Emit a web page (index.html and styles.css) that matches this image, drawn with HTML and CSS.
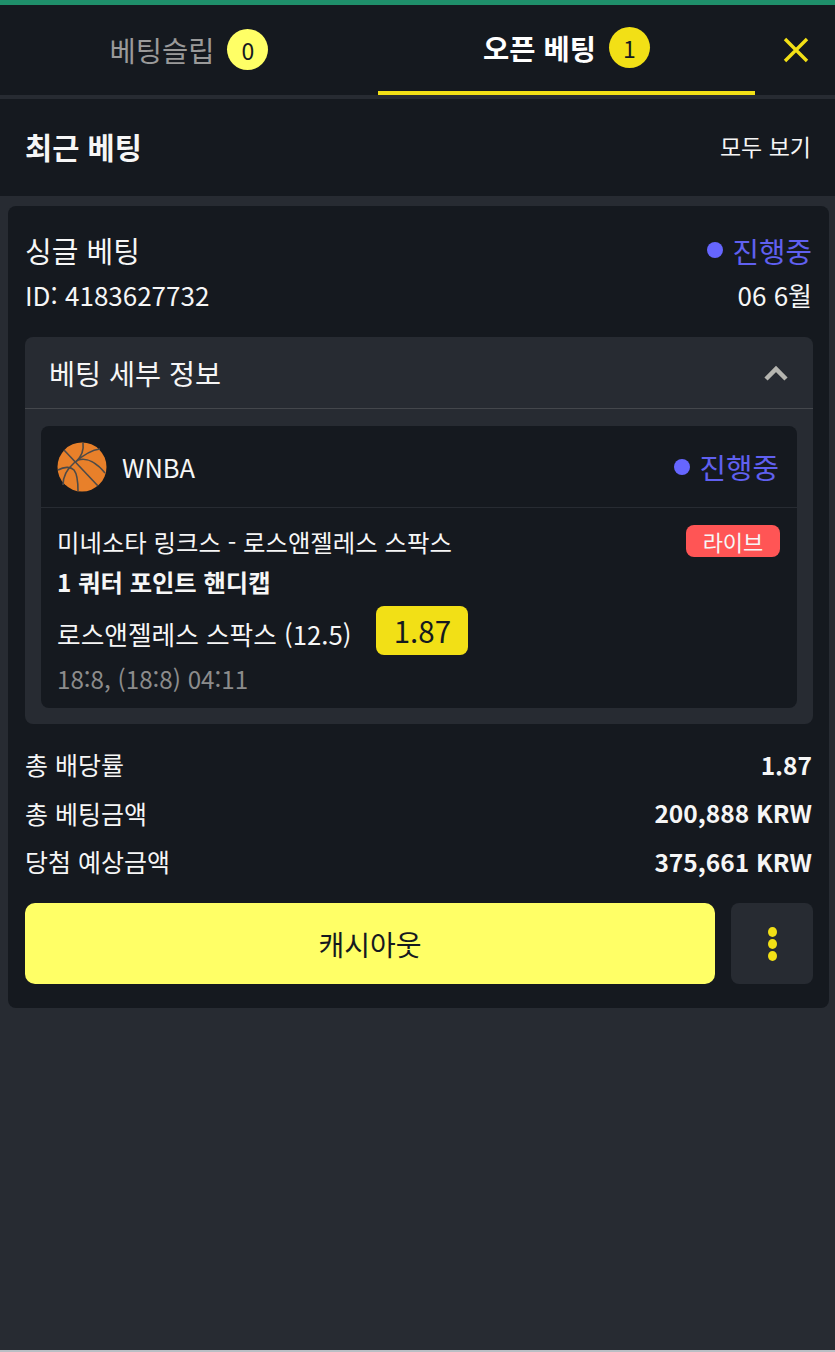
FILE: index.html
```html
<!DOCTYPE html>
<html lang="ko">
<head>
  <meta charset="UTF-8">
  <meta name="viewport" content="width=device-width, initial-scale=1.0">
  <title>오픈 베팅</title>
  <link rel="stylesheet" href="styles.css">
</head>
<body>
  <div class="top-bar"></div>
  <header class="tabs">
    <div class="tab">
      <span>베팅슬립</span>
      <span class="count count-light">0</span>
    </div>
    <div class="tab tab-active">
      <span>오픈 베팅</span>
      <span class="count">1</span>
    </div>
    <div class="tab-close">
      <svg width="26" height="26" viewBox="0 0 26 26">
        <path d="M2 2 L24 24 M24 2 L2 24" stroke="#f2e016" stroke-width="3.4" fill="none"/>
      </svg>
    </div>
  </header>
  <div class="recent">
    <h1>최근 베팅</h1>
    <a class="see-all">모두 보기</a>
  </div>
  <main class="bet-card">
    <div class="row bet-title">
      <span>싱글 베팅</span>
      <span class="status"><i class="dot"></i>진행중</span>
    </div>
    <div class="row bet-id">
      <span>ID: 4183627732</span>
      <span>06 6월</span>
    </div>
    <section class="details">
      <div class="details-head">
        <span>베팅 세부 정보</span>
        <svg width="26" height="18" viewBox="0 0 26 18">
          <path d="M3 15 L13 5 L23 15" stroke="#b5b5b0" stroke-width="4.5" fill="none"/>
        </svg>
      </div>
      <div class="event">
        <div class="event-head">
          <div class="league">
            <svg width="50" height="50" viewBox="0 0 50 50">
              <circle cx="25" cy="25" r="24.5" fill="#e8802a"/>
              <g fill="none" stroke="#4d4a48" stroke-width="1.6">
                <path d="M7 8 L41 44"/>
                <path d="M43 7 C34 8 25 14 17 21 C10 27 6 34 6 43"/>
                <path d="M26 1 C27 8 25 14 19 20"/>
                <path d="M1 28 C8 24 14 25 17 28 C21 33 21 42 21 49"/>
                <path d="M21 18 C30 15 40 21 48 31"/>
              </g>
            </svg>
            <span>WNBA</span>
          </div>
          <span class="status"><i class="dot"></i>진행중</span>
        </div>
        <div class="event-body">
          <div class="row event-teams">
            <span>미네소타 링크스 - 로스앤젤레스 스팍스</span>
            <span class="live">라이브</span>
          </div>
          <div class="event-market">1 쿼터 포인트 핸디캡</div>
          <div class="event-pick">
            <span class="pick-name">로스앤젤레스 스팍스 (12.5)</span>
            <span class="odds">1.87</span>
          </div>
          <div class="event-score">18:8, (18:8) 04:11</div>
        </div>
      </div>
    </section>
    <div class="row total">
      <span>총 배당률</span>
      <b>1.87</b>
    </div>
    <div class="row total">
      <span>총 베팅금액</span>
      <b>200,888 KRW</b>
    </div>
    <div class="row total">
      <span>당첨 예상금액</span>
      <b>375,661 KRW</b>
    </div>
    <div class="actions">
      <button class="cashout">캐시아웃</button>
      <button class="more"><i></i><i></i><i></i></button>
    </div>
  </main>
</body>
</html>
```

FILE: styles.css
```css
* {
  box-sizing: border-box;
}

body {
  margin: 0;
  height: 1352px;
  overflow: hidden;
  background-color: #272b32;
  color: #f6f6f6;
  font-family: "Noto Sans CJK KR", "Noto Sans", sans-serif;
  font-size: 25px;
  border-bottom: 2px solid #b9bec4;
}

.top-bar {
  height: 5px;
  background-color: #1f8f6a;
}

.tabs {
  display: flex;
  height: 90px;
  background-color: #15191f;
}

.tab {
  flex: 0 0 378px;
  display: flex;
  align-items: center;
  justify-content: center;
  gap: 13px;
  color: #9a9a9a;
  font-size: 28.5px;
  padding-bottom: 1px;
}

.tab-active {
  flex-basis: 377px;
  color: #fff;
  font-weight: 700;
  border-bottom: 4px solid #f2e016;
  padding-bottom: 1px;
}

.count {
  width: 41px;
  height: 41px;
  border-radius: 50%;
  background-color: #f2e016;
  color: #15191f;
  font-size: 23px;
  font-weight: 400;
  display: flex;
  align-items: center;
  justify-content: center;
}

.count-light {
  background-color: #ffff66;
}

.tab-close {
  flex: 1;
  display: flex;
  align-items: center;
  justify-content: center;
  padding-left: 2px;
}

.recent {
  display: flex;
  justify-content: space-between;
  align-items: center;
  height: 101px;
  padding: 0 24px 3px 25px;
  background-color: #15191f;
  border-top: 4px solid #272b32;
}

.recent h1 {
  margin: 0;
  font-size: 29.5px;
  font-weight: 700;
}

.see-all {
  font-size: 23px;
}

.bet-card {
  margin: 10px 6px 0 8px;
  height: 802px;
  padding: 24px 16px 0 17px;
  background-color: #15191f;
  border-radius: 8px;
}

.row {
  display: flex;
  justify-content: space-between;
  align-items: center;
}

.bet-title {
  height: 40px;
  margin-bottom: 6px;
  padding-right: 1px;
  font-size: 29px;
}

.status {
  display: flex;
  align-items: center;
  gap: 10px;
  color: #6060f0;
  font-size: 28.8px;
}

.dot {
  width: 16px;
  height: 16px;
  border-radius: 50%;
  background-color: #6666ff;
}

.bet-id {
  height: 36px;
  margin-bottom: 25px;
  padding-right: 1px;
  font-size: 26px;
}

.details {
  height: 387px;
  background-color: #272b32;
  border-radius: 8px;
}

.details-head {
  display: flex;
  justify-content: space-between;
  align-items: center;
  height: 72px;
  padding: 0 24px;
  font-size: 28.3px;
  border-bottom: 1px solid #44474c;
}

.event {
  margin: 17px 16px 0;
  height: 282px;
  background-color: #15191f;
  border-radius: 8px;
}

.event-head {
  display: flex;
  justify-content: space-between;
  align-items: center;
  height: 82px;
  padding: 0 18px 0 16px;
  border-bottom: 1px solid #272b32;
}

.league {
  display: flex;
  align-items: center;
  gap: 15px;
  font-size: 25.5px;
}

.event-body {
  padding: 16px 16px 0;
}

.event-teams {
  height: 34px;
  padding-right: 1px;
  font-size: 24.4px;
}

.live {
  width: 94px;
  height: 32px;
  border-radius: 8px;
  background-color: #ff5555;
  font-size: 22px;
  display: flex;
  align-items: center;
  justify-content: center;
}

.event-market {
  height: 48px;
  padding-bottom: 2px;
  font-size: 24.3px;
  font-weight: 700;
  display: flex;
  align-items: center;
}

.event-pick {
  display: flex;
  align-items: center;
  gap: 25px;
  height: 50px;
  margin-top: -1px;
}

.pick-name {
  margin-top: 6px;
  font-size: 25.7px;
}

.odds {
  width: 92px;
  height: 49px;
  border-radius: 8px;
  background-color: #f2e016;
  color: #15191f;
  font-size: 29.5px;
  display: flex;
  align-items: center;
  justify-content: center;
}

.event-score {
  margin-top: 6px;
  font-size: 24.2px;
  color: #8c8c8c;
}

.total {
  height: 48.5px;
  padding-right: 1px;
}

.total b {
  font-size: 24.5px;
  font-weight: 700;
}

.details + .total {
  margin-top: 16px;
}

.actions {
  display: flex;
  gap: 16px;
  margin-top: 17.5px;
}

.cashout {
  flex: 1;
  height: 81px;
  border: none;
  border-radius: 10px;
  background-color: #ffff66;
  color: #15191f;
  font-family: inherit;
  font-size: 28px;
}

.more {
  width: 82px;
  height: 81px;
  border: none;
  border-radius: 8px;
  background-color: #272b32;
  display: flex;
  flex-direction: column;
  align-items: center;
  justify-content: center;
  gap: 2px;
}

.more i {
  width: 9px;
  height: 10px;
  border-radius: 50%;
  background-color: #f2e016;
}
```
